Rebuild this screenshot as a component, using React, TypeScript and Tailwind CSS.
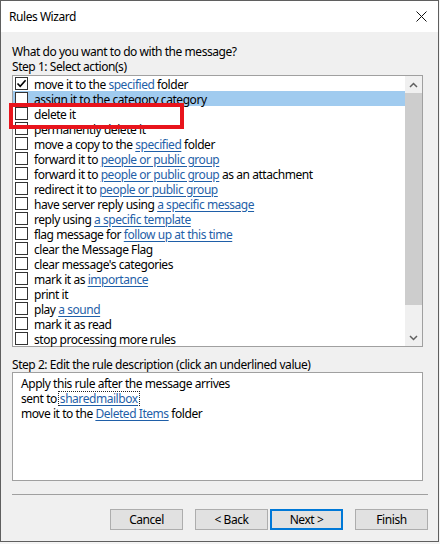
import React from "react";

type Seg = { t: string; link?: boolean };

const link = "text-[#1f5fa8] underline decoration-[#1f5fa8] underline-offset-[2px]";

const actions: { segs: Seg[]; checked?: boolean; selected?: boolean }[] = [
  { segs: [{ t: "move it to the " }, { t: "specified", link: true }, { t: " folder" }], checked: true },
  { segs: [{ t: "assign it to the category category" }], selected: true },
  { segs: [{ t: "delete it" }] },
  { segs: [{ t: "permanently delete it" }] },
  { segs: [{ t: "move a copy to the " }, { t: "specified", link: true }, { t: " folder" }] },
  { segs: [{ t: "forward it to " }, { t: "people or public group", link: true }] },
  { segs: [{ t: "forward it to " }, { t: "people or public group", link: true }, { t: " as an attachment" }] },
  { segs: [{ t: "redirect it to " }, { t: "people or public group", link: true }] },
  { segs: [{ t: "have server reply using " }, { t: "a specific message", link: true }] },
  { segs: [{ t: "reply using " }, { t: "a specific template", link: true }] },
  { segs: [{ t: "flag message for " }, { t: "follow up at this time", link: true }] },
  { segs: [{ t: "clear the Message Flag" }] },
  { segs: [{ t: "clear message's categories" }] },
  { segs: [{ t: "mark it as " }, { t: "importance", link: true }] },
  { segs: [{ t: "print it" }] },
  { segs: [{ t: "play " }, { t: "a sound", link: true }] },
  { segs: [{ t: "mark it as read" }] },
  { segs: [{ t: "stop processing more rules" }] },
];

function Checkbox({ checked }: { checked?: boolean }) {
  return (
    <span className="flex h-[13px] w-[13px] shrink-0 items-center justify-center border border-[#333333] bg-white">
      {checked ? (
        <svg width="11" height="11" viewBox="0 0 11 11">
          <path d="M1.5 5.5 L4.2 8.3 L9.6 2.2" fill="none" stroke="#000" strokeWidth="1.6" />
        </svg>
      ) : null}
    </span>
  );
}

function Button({ label, focused }: { label: string; focused?: boolean }) {
  return (
    <button
      className={
        "flex h-[21px] w-[73px] items-center justify-center bg-[#e1e1e1] text-[12px] text-black " +
        (focused ? "border-2 border-[#0078d7]" : "border border-[#adadad]")
      }
    >
      {label}
    </button>
  );
}

export default function App() {
  return (
    <div className="h-[544px] w-[440px] bg-[#f4f4f4] font-['Noto_Sans',sans-serif] text-[12px] leading-[15px] tracking-[-0.45px] text-black">
      <div className="relative flex h-[542px] w-[439px] flex-col border border-[#5f5f5f] bg-[#f0f0f0]">
        {/* title bar */}
        <div className="flex h-[31px] shrink-0 items-center justify-between bg-white pl-[8px] pr-[11px]">
          <span className="text-[12px]">Rules Wizard</span>
          <svg width="11" height="11" viewBox="0 0 11 11">
            <path d="M0.5 0.5 L10.5 10.5 M10.5 0.5 L0.5 10.5" stroke="#111" strokeWidth="1" />
          </svg>
        </div>

        <div className="flex flex-col pl-[11px] pt-[12px]">
          <div>What do you want to do with the message?</div>
          <div>Step 1: Select action(s)</div>

          {/* action list */}
          <div className="mt-[1px] flex h-[272px] w-[411px] border border-[#a0a0a0] bg-white">
            <div className="flex w-[392px] flex-col">
              {actions.map((a, i) => (
                <div
                  key={i}
                  className={"flex h-[15px] items-center gap-[6px] whitespace-nowrap pl-[2px] " + (a.selected ? "bg-[#a0cbef]" : "")}
                >
                  <Checkbox checked={a.checked} />
                  <span className="pt-[1px]">
                    {a.segs.map((s, j) => (
                      <span key={j} className={s.link ? link : ""}>
                        {s.t}
                      </span>
                    ))}
                  </span>
                </div>
              ))}
            </div>
            <div className="flex w-[17px] flex-col bg-[#f0f0f0]">
              <div className="flex h-[17px] items-center justify-center">
                <svg width="9" height="6" viewBox="0 0 9 6">
                  <path d="M1 5 L4.5 1.5 L8 5" fill="none" stroke="#606060" strokeWidth="1.5" />
                </svg>
              </div>
              <div className="h-[212px] bg-[#cdcdcd]" />
              <div className="flex-1" />
              <div className="flex h-[17px] items-center justify-center">
                <svg width="9" height="6" viewBox="0 0 9 6">
                  <path d="M1 1 L4.5 4.5 L8 1" fill="none" stroke="#606060" strokeWidth="1.5" />
                </svg>
              </div>
            </div>
          </div>

          <div className="mt-[10px]">Step 2: Edit the rule description (click an underlined value)</div>

          {/* description */}
          <div className="flex h-[109px] w-[411px] flex-col border border-[#a0a0a0] bg-white pl-[8px] pt-[3px]">
            <div>Apply this rule after the message arrives</div>
            <div className="flex">
              <span>sent to</span>
              <span className="ml-[1px] border border-dotted border-[#222] px-[1px] leading-[13px]">
                <span className={link}>sharedmailbox</span>
              </span>
            </div>
            <div>
              move it to the <span className={link}>Deleted Items</span> folder
            </div>
          </div>

          <div className="mt-[13px] h-[1px] w-[416px] bg-[#a0a0a0]" />

          <div className="mt-[14px] flex w-[416px] justify-end">
            <Button label="Cancel" />
            <div className="w-[12px]" />
            <Button label="< Back" />
            <div className="w-[2px]" />
            <Button label="Next >" focused />
            <div className="w-[12px]" />
            <Button label="Finish" />
          </div>
        </div>

        {/* red highlight box */}
        <div className="absolute left-[8px] top-[102px] h-[26px] w-[175px] border-[4px] border-[#e8141c]" />
      </div>
    </div>
  );
}
